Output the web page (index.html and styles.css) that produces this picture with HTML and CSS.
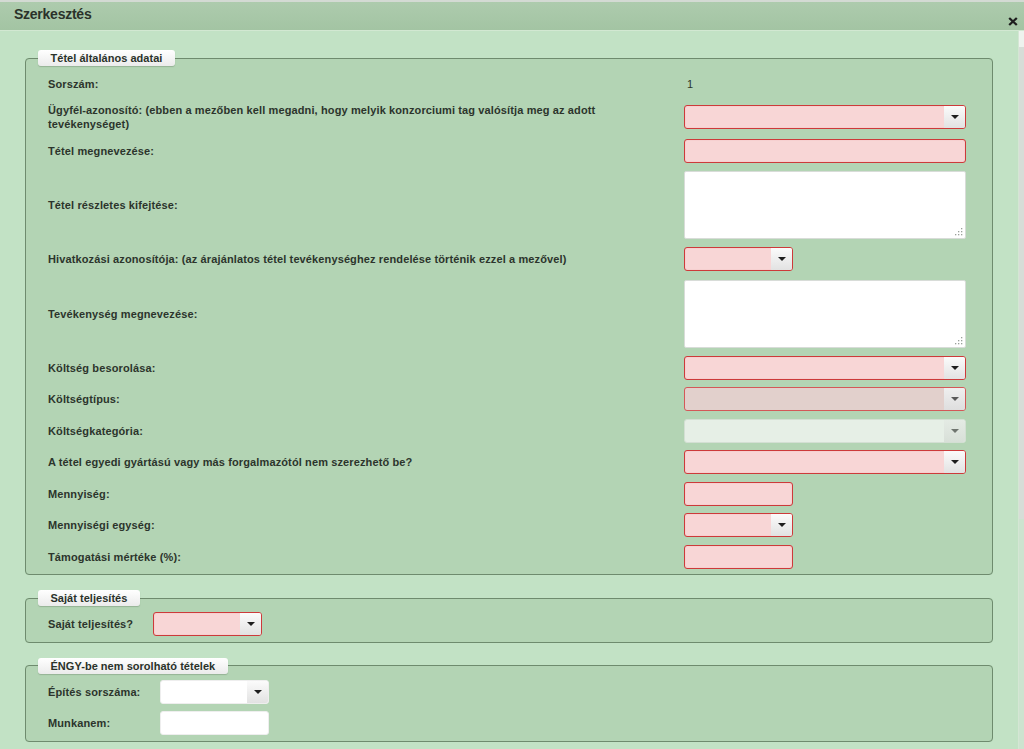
FILE: index.html
```html
<!DOCTYPE html>
<html lang="hu">
<head>
<meta charset="utf-8">
<title>Szerkesztés</title>
<link rel="stylesheet" href="styles.css">
</head>
<body>
<div class="dialog">
  <div class="titlebar">
    <span class="title">Szerkesztés</span>
    <span class="close" title="Bezárás">
      <svg width="10" height="9" viewBox="0 0 10 9"><path d="M1.2 1 L8.8 8 M8.8 1 L1.2 8" stroke="#1e1e1e" stroke-width="2.3"/></svg>
    </span>
  </div>
  <div class="main">
    <div class="content">
      <fieldset class="group g1">
        <legend>Tétel általános adatai</legend>
        <div class="row"><div class="label">Sorszám:</div><div class="value">1</div></div>
        <div class="row"><div class="label">Ügyfél-azonosító: (ebben a mezőben kell megadni, hogy melyik konzorciumi tag valósítja meg az adott tevékenységet)</div>
          <div class="sel req wide"><span class="field"></span><span class="btn"><svg width="8" height="4" viewBox="0 0 8 4"><path d="M0 0H8L4 4Z"/></svg></span></div></div>
        <div class="row"><div class="label">Tétel megnevezése:</div><input class="inp req wide" type="text"></div>
        <div class="row tall"><div class="label">Tétel részletes kifejtése:</div>
          <div class="ta-wrap"><textarea class="txt"></textarea><span class="grip"><svg width="8" height="8" viewBox="0 0 8 8"><g fill="#9aa09a"><rect x="6" y="0" width="1.3" height="1.3"/><rect x="3" y="3" width="1.3" height="1.3"/><rect x="6" y="3" width="1.3" height="1.3"/><rect x="0" y="6" width="1.3" height="1.3"/><rect x="3" y="6" width="1.3" height="1.3"/><rect x="6" y="6" width="1.3" height="1.3"/></g></svg></span></div></div>
        <div class="row"><div class="label">Hivatkozási azonosítója: (az árajánlatos tétel tevékenységhez rendelése történik ezzel a mezővel)</div>
          <div class="sel req small"><span class="field"></span><span class="btn"><svg width="8" height="4" viewBox="0 0 8 4"><path d="M0 0H8L4 4Z"/></svg></span></div></div>
        <div class="row tall"><div class="label">Tevékenység megnevezése:</div>
          <div class="ta-wrap"><textarea class="txt"></textarea><span class="grip"><svg width="8" height="8" viewBox="0 0 8 8"><g fill="#9aa09a"><rect x="6" y="0" width="1.3" height="1.3"/><rect x="3" y="3" width="1.3" height="1.3"/><rect x="6" y="3" width="1.3" height="1.3"/><rect x="0" y="6" width="1.3" height="1.3"/><rect x="3" y="6" width="1.3" height="1.3"/><rect x="6" y="6" width="1.3" height="1.3"/></g></svg></span></div></div>
        <div class="row"><div class="label">Költség besorolása:</div>
          <div class="sel req wide"><span class="field"></span><span class="btn"><svg width="8" height="4" viewBox="0 0 8 4"><path d="M0 0H8L4 4Z"/></svg></span></div></div>
        <div class="row"><div class="label">Költségtípus:</div>
          <div class="sel req-dis wide"><span class="field"></span><span class="btn"><svg width="8" height="4" viewBox="0 0 8 4"><path d="M0 0H8L4 4Z"/></svg></span></div></div>
        <div class="row"><div class="label">Költségkategória:</div>
          <div class="sel dis wide"><span class="field"></span><span class="btn"><svg width="8" height="4" viewBox="0 0 8 4"><path d="M0 0H8L4 4Z"/></svg></span></div></div>
        <div class="row"><div class="label">A tétel egyedi gyártású vagy más forgalmazótól nem szerezhető be?</div>
          <div class="sel req wide"><span class="field"></span><span class="btn"><svg width="8" height="4" viewBox="0 0 8 4"><path d="M0 0H8L4 4Z"/></svg></span></div></div>
        <div class="row"><div class="label">Mennyiség:</div><input class="inp req small" type="text"></div>
        <div class="row"><div class="label">Mennyiségi egység:</div>
          <div class="sel req small"><span class="field"></span><span class="btn"><svg width="8" height="4" viewBox="0 0 8 4"><path d="M0 0H8L4 4Z"/></svg></span></div></div>
        <div class="row"><div class="label">Támogatási mértéke (%):</div><input class="inp req small" type="text"></div>
      </fieldset>

      <fieldset class="group g2">
        <legend>Saját teljesítés</legend>
        <div class="row"><div class="label">Saját teljesítés?</div>
          <div class="sel req small"><span class="field"></span><span class="btn"><svg width="8" height="4" viewBox="0 0 8 4"><path d="M0 0H8L4 4Z"/></svg></span></div></div>
      </fieldset>

      <fieldset class="group g3">
        <legend>ÉNGY-be nem sorolható tételek</legend>
        <div class="row"><div class="label">Építés sorszáma:</div>
          <div class="sel plain small"><span class="field"></span><span class="btn"><svg width="8" height="4" viewBox="0 0 8 4"><path d="M0 0H8L4 4Z"/></svg></span></div></div>
        <div class="row"><div class="label">Munkanem:</div><input class="inp plain small" type="text"></div>
      </fieldset>
    </div>
    <div class="scrollbar"><div class="sb-btn"></div><div class="sb-thumb"></div></div>
  </div>
</div>
</body>
</html>
```

FILE: styles.css
```css
html, body {
  margin: 0;
  padding: 0;
  height: 749px;
  overflow: hidden;
}
body {
  font-family: "Liberation Sans", Arial, sans-serif;
  color: #2c342c;
  background: #c2e2c5;
}
.dialog {
  display: flex;
  flex-direction: column;
  height: 749px;
}
.titlebar {
  display: flex;
  align-items: flex-start;
  height: 28px;
  border-top: 2px solid #d3dad3;
  border-bottom: 1px solid #d2e8d2;
  background: linear-gradient(#adcbad, #a3c4a3);
}
.title {
  padding: 4px 0 0 14px;
  font-size: 14px;
  line-height: 16px;
  font-weight: bold;
  letter-spacing: -0.25px;
  color: #2a322a;
}
.close {
  margin: 15px 6px 0 auto;
  display: flex;
}
.main {
  flex: 1;
  display: flex;
  min-height: 0;
}
.content {
  flex: 1;
  padding: 0 25px;
  min-width: 0;
}
.scrollbar {
  width: 5px;
  display: flex;
  flex-direction: column;
  background: #cde3cf;
  border-left: 1px solid #d4e6d4;
}
.sb-btn {
  height: 16px;
  background: #eef3ee;
}
.sb-thumb {
  height: 472px;
  background: #d7ddd7;
}
.group {
  margin: 15px 0 0 0;
  padding: 2px 0 2px 12px;
  border: 1px solid #6e8b6e;
  border-radius: 4px;
  background: #b3d4b4;
  min-inline-size: 0;
}
.g1 {
  margin-top: 19px;
  padding-top: 1.5px;
}
.group legend {
  padding: 0 12.5px;
  font-size: 11px;
  line-height: 16px;
  font-weight: bold;
  letter-spacing: 0.03px;
  color: #2a322a;
  background: linear-gradient(#ffffff, #ebebeb);
  border-radius: 3px;
  box-shadow: 0 1px 1px rgba(60, 80, 60, 0.25);
}
.row {
  display: flex;
  align-items: center;
  padding: 4px 0 3.5px 10px;
  min-height: 24px;
}
.row.tall {
  padding-top: 5px;
  padding-bottom: 4px;
}
.label {
  box-sizing: border-box;
  flex: none;
  width: 636px;
  padding-right: 30px;
  font-size: 11px;
  line-height: 14px;
  font-weight: bold;
  letter-spacing: 0.12px;
}
.g2 .label { width: 105px; padding-right: 0; }
.g3 .label { width: 112px; padding-right: 0; }
.value {
  padding-left: 3px;
  font-size: 11px;
  line-height: 14px;
}
.sel, .inp {
  box-sizing: border-box;
  height: 24px;
  border-radius: 3px;
  flex: none;
}
.wide { width: 282px; }
.small { width: 109px; }
.sel {
  display: flex;
  overflow: hidden;
}
.sel .field {
  flex: 1;
}
.sel .btn {
  width: 21px;
  display: flex;
  align-items: center;
  justify-content: center;
  background: linear-gradient(#fbfbfb, #e2e2e2);
  fill: #1e1e1e;
}
.inp {
  margin: 0;
  padding: 0 4px;
  font: 11px "Liberation Sans", Arial, sans-serif;
  outline: none;
}
.req {
  border: 1px solid #cd3a3a;
  background: #f8d6d6;
  box-shadow: inset 0 0 1px rgba(200, 60, 60, 0.35);
}
.req-dis {
  border: 1px solid #d35858;
  background: #e2d0cc;
}
.req-dis .btn {
  background: linear-gradient(#efefef, #dedede);
  fill: #5a5a5a;
}
.dis {
  border: 1px solid #d3dfd3;
  background: #e6efe6;
}
.dis .btn {
  background: linear-gradient(#e4ebe4, #d8e0d8);
  fill: #6f756f;
}
.plain {
  border: 1px solid #eeeeee;
  background: #ffffff;
}
.ta-wrap {
  position: relative;
  flex: none;
  width: 282px;
  height: 68px;
}
.txt {
  display: block;
  box-sizing: border-box;
  width: 282px;
  height: 68px;
  margin: 0;
  border: 1px solid #d8dcd8;
  border-radius: 2px;
  background: #ffffff;
  resize: none;
  outline: none;
}
.grip {
  position: absolute;
  right: 3px;
  bottom: 3px;
  display: flex;
}
```
